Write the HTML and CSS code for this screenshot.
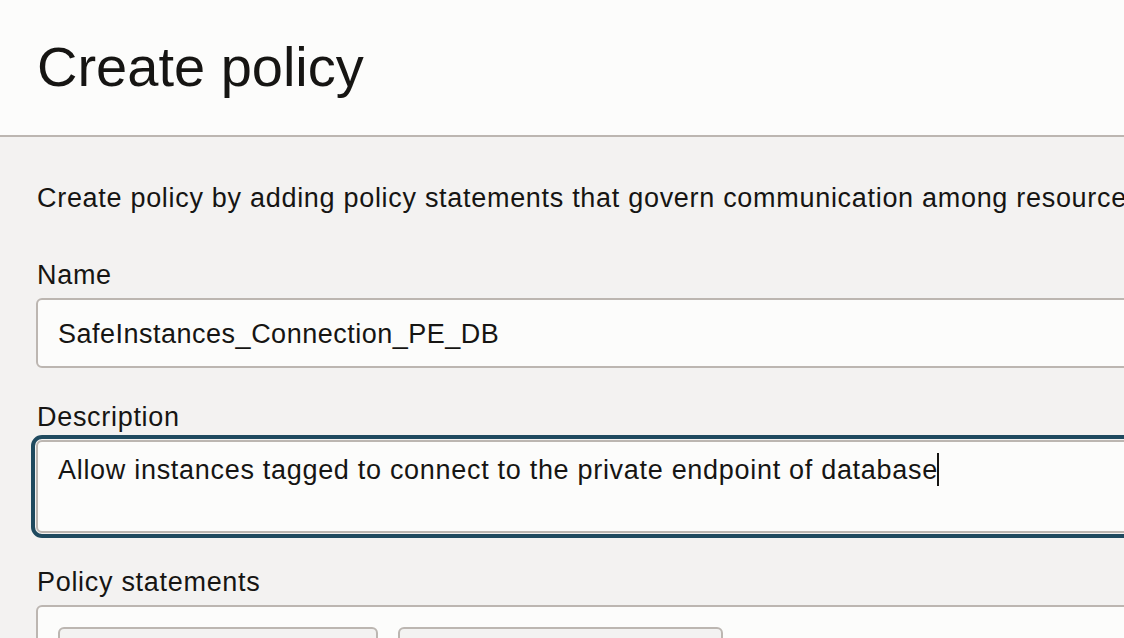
FILE: index.html
```html
<!DOCTYPE html>
<html lang="en">
<head>
<meta charset="utf-8">
<title>Create policy</title>
<link rel="stylesheet" href="styles.css">
</head>
<body>
<header class="page-header">
  <h1 class="page-title">Create policy</h1>
</header>
<main class="content">
  <p class="intro">Create policy by adding policy statements that govern communication among resources.</p>
  <div class="field">
    <label class="field-label">Name</label>
    <div class="input">SafeInstances_Connection_PE_DB</div>
  </div>
  <div class="field">
    <label class="field-label">Description</label>
    <div class="textarea focused">Allow instances tagged to connect to the private endpoint of database<span class="caret"></span></div>
  </div>
  <div class="field">
    <label class="field-label">Policy statements</label>
    <div class="statements">
      <div class="statement-box box-one"></div>
      <div class="statement-box box-two"></div>
    </div>
  </div>
</main>
</body>
</html>
```
FILE: styles.css
```css
html, body {
  margin: 0;
  padding: 0;
  overflow: hidden;
  background: #f3f2f1;
  color: #161513;
  font-family: "Liberation Sans", Arial, Helvetica, sans-serif;
}

.page-header {
  height: 135px;
  background: #fcfcfb;
  border-bottom: 2px solid #bcb6b1;
  padding-left: 37px;
  box-sizing: content-box;
}

.page-title {
  margin: 0;
  padding-top: 35px;
  font-size: 56px;
  line-height: 64px;
  font-weight: 400;
  letter-spacing: 0;
}

.content {
  width: 1400px;
  padding: 45px 0 0 36px;
  font-size: 27px;
  line-height: 32px;
  letter-spacing: 0.7px;
}

.intro {
  margin: 0 0 45px 1px;
  white-space: nowrap;
}

.field {
  display: flex;
  flex-direction: column;
  gap: 7px;
  margin-bottom: 33px;
}

.field-label {
  display: block;
  margin-left: 1px;
}

.input {
  background: #fcfcfb;
  border: 2px solid #bcb6b1;
  border-radius: 6px;
  padding: 18px 20px 16px;
  white-space: nowrap;
  letter-spacing: 0.5px;
}

.textarea {
  background: #fcfcfb;
  border: 2px solid #bcb6b1;
  border-radius: 6px;
  padding: 11px 20px 45px;
  white-space: nowrap;
}

.focused {
  outline: 4px solid #1f4a5f;
  outline-offset: 1px;
}

.caret {
  display: inline-block;
  width: 2px;
  height: 33px;
  background: #161513;
  vertical-align: -7px;
  margin-left: -1px;
}

.statements {
  display: flex;
  gap: 20px;
  background: #fcfcfb;
  border: 2px solid #bcb6b1;
  border-radius: 6px;
  padding: 20px 20px 0;
  height: 120px;
}

.statement-box {
  background: #f3f2f1;
  border: 2px solid #bcb6b1;
  border-radius: 6px;
  height: 60px;
}

.box-one {
  width: 316px;
}

.box-two {
  width: 321px;
}
```
